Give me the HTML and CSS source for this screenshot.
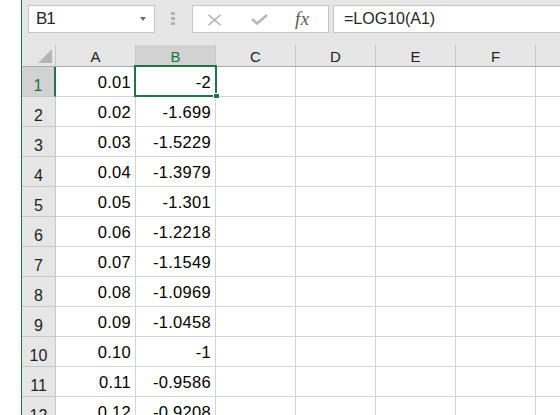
FILE: index.html
```html
<!DOCTYPE html>
<html>
<head>
<meta charset="utf-8">
<link rel="stylesheet" href="styles.css">
</head>
<body>
<div class="app">
  <div class="edge"></div>
  <div class="main">
    <div class="toolbar">
      <div class="namebox"><span class="name">B1</span><span class="caret"></span></div>
      <div class="grip"><i></i><i></i><i></i></div>
      <div class="buttons">
        <svg class="btn-x" width="15" height="12" viewBox="0 0 15 12"><path d="M1.5 0.8 L13.5 11.2 M13.5 0.8 L1.5 11.2" stroke="#b8b8b8" stroke-width="1.7" fill="none"/></svg>
        <svg class="btn-ok" width="17" height="11" viewBox="0 0 17 11"><path d="M1 5 L6 9.5 L16 1" stroke="#b8b8b8" stroke-width="2.6" fill="none"/></svg>
        <span class="fx">fx</span>
      </div>
      <div class="formula">=LOG10(A1)</div>
    </div>
    <div class="sheet">
      <div class="hrow">
        <div class="corner"><span class="tri"></span></div>
        <div class="ch">A</div>
        <div class="ch sel-h">B</div>
        <div class="ch">C</div>
        <div class="ch">D</div>
        <div class="ch">E</div>
        <div class="ch">F</div>
        <div class="ch">&nbsp;</div>
      </div>
      <div class="row"><div class="rh sel-r">1</div><div class="c">0.01</div><div class="c">-2</div><div class="c"></div><div class="c"></div><div class="c"></div><div class="c"></div><div class="c"></div></div>
      <div class="row"><div class="rh">2</div><div class="c">0.02</div><div class="c">-1.699</div><div class="c"></div><div class="c"></div><div class="c"></div><div class="c"></div><div class="c"></div></div>
      <div class="row"><div class="rh">3</div><div class="c">0.03</div><div class="c">-1.5229</div><div class="c"></div><div class="c"></div><div class="c"></div><div class="c"></div><div class="c"></div></div>
      <div class="row"><div class="rh">4</div><div class="c">0.04</div><div class="c">-1.3979</div><div class="c"></div><div class="c"></div><div class="c"></div><div class="c"></div><div class="c"></div></div>
      <div class="row"><div class="rh">5</div><div class="c">0.05</div><div class="c">-1.301</div><div class="c"></div><div class="c"></div><div class="c"></div><div class="c"></div><div class="c"></div></div>
      <div class="row"><div class="rh">6</div><div class="c">0.06</div><div class="c">-1.2218</div><div class="c"></div><div class="c"></div><div class="c"></div><div class="c"></div><div class="c"></div></div>
      <div class="row"><div class="rh">7</div><div class="c">0.07</div><div class="c">-1.1549</div><div class="c"></div><div class="c"></div><div class="c"></div><div class="c"></div><div class="c"></div></div>
      <div class="row"><div class="rh">8</div><div class="c">0.08</div><div class="c">-1.0969</div><div class="c"></div><div class="c"></div><div class="c"></div><div class="c"></div><div class="c"></div></div>
      <div class="row"><div class="rh">9</div><div class="c">0.09</div><div class="c">-1.0458</div><div class="c"></div><div class="c"></div><div class="c"></div><div class="c"></div><div class="c"></div></div>
      <div class="row"><div class="rh">10</div><div class="c">0.10</div><div class="c">-1</div><div class="c"></div><div class="c"></div><div class="c"></div><div class="c"></div><div class="c"></div></div>
      <div class="row"><div class="rh">11</div><div class="c">0.11</div><div class="c">-0.9586</div><div class="c"></div><div class="c"></div><div class="c"></div><div class="c"></div><div class="c"></div></div>
      <div class="row"><div class="rh">12</div><div class="c">0.12</div><div class="c">-0.9208</div><div class="c"></div><div class="c"></div><div class="c"></div><div class="c"></div><div class="c"></div></div>
      <div class="selection"></div>
      <div class="handle"></div>
    </div>
  </div>
</div>
</body>
</html>
```

FILE: styles.css
```css
* { box-sizing: border-box; }
html, body { margin: 0; padding: 0; }
body {
  width: 560px;
  height: 415px;
  overflow: hidden;
  font-family: "Liberation Sans", Arial, sans-serif;
  background: #ffffff;
}
.app {
  display: flex;
  width: 560px;
  height: 415px;
  overflow: hidden;
}
.edge {
  flex: 0 0 22px;
  background: #ffffff;
  border-right: 1px solid #217346;
}
.main {
  flex: 1;
  min-width: 0;
  background: #e6e6e6;
  overflow: hidden;
}
.toolbar {
  height: 44px;
  display: flex;
  align-items: flex-start;
  padding-top: 5px;
  padding-left: 6px;
}
.namebox {
  width: 127px;
  height: 28px;
  background: #ffffff;
  border: 1px solid #c6c6c6;
  display: flex;
  align-items: center;
  justify-content: space-between;
  padding-left: 7px;
  padding-right: 8px;
}
.name {
  font-size: 17px;
  color: #262626;
  letter-spacing: -1px;
}
.caret {
  width: 0;
  height: 0;
  border-left: 3.5px solid transparent;
  border-right: 3.5px solid transparent;
  border-top: 4px solid #6a6a6a;
}
.grip {
  display: flex;
  flex-direction: column;
  gap: 2px;
  margin-left: 16px;
  margin-top: 7px;
}
.grip i {
  display: block;
  width: 4px;
  height: 3px;
  background: #b4b4b4;
}
.buttons {
  margin-left: 17px;
  width: 137px;
  height: 28px;
  background: #ffffff;
  border: 1px solid #c6c6c6;
  display: flex;
  align-items: center;
  padding-left: 14px;
}
.btn-x { margin-top: 1px; }
.btn-ok { margin-left: 29px; margin-top: 1px; }
.fx {
  margin-left: 27px;
  font-family: "Liberation Serif", "Times New Roman", serif;
  font-style: italic;
  font-size: 19px;
  color: #5a5a5a;
  letter-spacing: 0.5px;
  margin-top: -1px;
}
.formula {
  margin-left: 4px;
  flex: 1;
  height: 28px;
  background: #ffffff;
  border: 1px solid #c6c6c6;
  border-right: none;
  font-size: 16px;
  color: #262626;
  padding-left: 10px;
  display: flex;
  align-items: center;
}
.sheet {
  position: relative;
}
.hrow {
  display: flex;
  height: 23px;
  border-bottom: 1px solid #ababab;
}
.corner {
  flex: 0 0 34px;
  border-right: 1px solid #c8c8c8;
  position: relative;
  margin-top: 1px;
}
.tri {
  position: absolute;
  right: 3px;
  bottom: 3px;
  width: 0;
  height: 0;
  border-left: 14px solid transparent;
  border-bottom: 14px solid #b4b4b4;
}
.ch {
  flex: 0 0 80px;
  border-right: 1px solid #c8c8c8;
  margin-top: 1px;
  text-align: center;
  font-size: 15px;
  color: #222;
  line-height: 22px;
  padding-top: 1px;
}
.ch.sel-h {
  background: #d2d2d2;
  color: #217346;
  border-bottom: 2px solid #217346;
  margin-bottom: -1px;
}
.row {
  display: flex;
  height: 30px;
}
.rh {
  flex: 0 0 34px;
  background: #e6e6e6;
  border-right: 1px solid #c8c8c8;
  border-bottom: 1px solid #c8c8c8;
  text-align: center;
  font-size: 16px;
  color: #222;
  padding-top: 10px;
  line-height: 18px;
}
.rh.sel-r {
  background: #d2d2d2;
  color: #217346;
  border-right: 2px solid #217346;
}
.c {
  flex: 0 0 80px;
  background: #ffffff;
  border-right: 1px solid #d4d4d4;
  border-bottom: 1px solid #d4d4d4;
  text-align: right;
  padding-right: 4px;
  font-size: 16.5px;
  color: #000;
  line-height: 18px;
  padding-top: 6px;
  letter-spacing: 0.3px;
}
.selection {
  position: absolute;
  left: 112px;
  top: 21px;
  width: 83px;
  height: 32px;
  border: 2px solid #217346;
}
.handle {
  position: absolute;
  left: 191px;
  top: 49px;
  width: 7px;
  height: 6px;
  background: #217346;
  border: 1px solid #ffffff;
}
```
